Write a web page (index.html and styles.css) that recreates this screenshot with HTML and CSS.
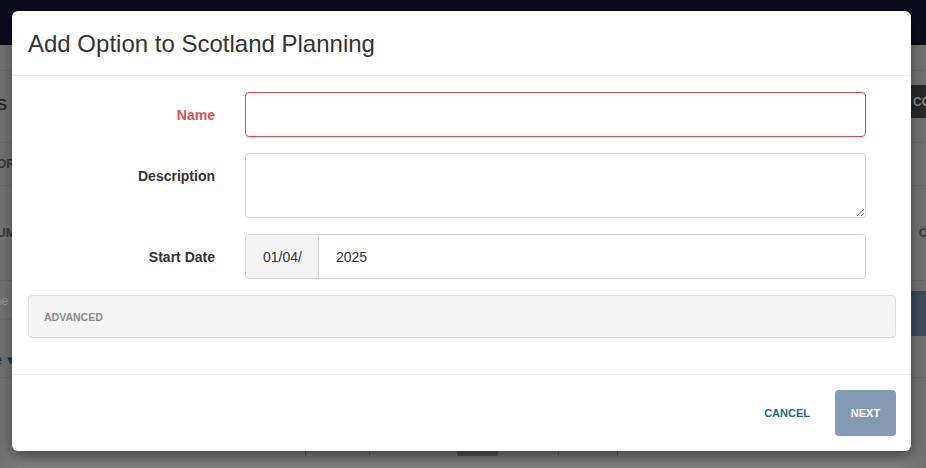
FILE: index.html
```html
<!DOCTYPE html>
<html>
<head>
<meta charset="utf-8">
<link rel="stylesheet" href="styles.css">
</head>
<body>
<div class="page">
  <div class="navbar"></div>
  <div class="bg-row r1"></div>
  <div class="bg-row r2"><span class="bg-h">s</span><span class="bg-dark-btn">CO</span></div>
  <div class="bg-row r3"><span class="bg-th">ORI</span></div>
  <div class="bg-row r4"><span class="bg-th">UM</span><span class="bg-th">OV</span></div>
  <div class="bg-row r5"><span class="bg-input">ne</span><span class="bg-navy-btn">–</span></div>
  <div class="bg-row r6"><span class="bg-link">e ▾</span></div>
  <div class="bg-row r7"></div>
  <div class="pager">
    <span class="pg w64">FIRST</span><span class="pg w88">PREVIOUS</span><span class="pg w40 cur">1</span><span class="pg w61">NEXT</span><span class="pg w60">LAST</span>
  </div>
</div>

<div class="modal">
  <div class="modal-header">
    <h4 class="modal-title">Add Option to Scotland Planning</h4>
  </div>
  <div class="modal-body">
    <div class="form-row">
      <label class="form-label error">Name</label>
      <input class="form-input error-input" type="text">
    </div>
    <div class="form-row">
      <label class="form-label">Description</label>
      <textarea class="form-input form-textarea"></textarea>
    </div>
    <div class="form-row">
      <label class="form-label">Start Date</label>
      <div class="input-group">
        <span class="addon">01/04/</span>
        <span class="group-value">2025</span>
      </div>
    </div>
    <div class="advanced">ADVANCED</div>
  </div>
  <div class="modal-footer">
    <button class="btn-cancel">CANCEL</button>
    <button class="btn-next">NEXT</button>
  </div>
</div>
</body>
</html>
```

FILE: styles.css
```css
* { box-sizing: border-box; }
html, body { margin: 0; padding: 0; }
body {
  width: 926px;
  height: 468px;
  overflow: hidden;
  font-family: "Liberation Sans", Arial, Helvetica, sans-serif;
  background: #7b7b7b;
  position: relative;
}

/* background page (already dimmed by backdrop) */
.page {
  height: 468px;
  display: flex;
  flex-direction: column;
  background: linear-gradient(90deg, #727272 0%, #7f7f7f 2%, #7f7f7f 97%, #707070 100%);
}
.navbar { height: 45px; background: #0b0c1a; flex: none; }
.bg-row {
  flex: none;
  display: flex;
  justify-content: space-between;
  align-items: center;
  border-bottom: 1px solid #6c6c6c;
  color: #333;
  font-size: 14px;
}
.r1 { height: 26px; }
.r2 { height: 72px; }
.r3 { height: 43px; }
.r4 { height: 95px; }
.r5 { height: 39px; border-bottom-color: #6f6f6f; }
.r6 { height: 58px; align-items: flex-end; padding-bottom: 8px; }
.r7 { height: 50px; border-bottom: none; }
.bg-h { font-size: 20px; color: #1f1f1f; margin-left: -3px; margin-top: -6px; }
.bg-dark-btn {
  background: #2a2a2a; color: #8a8a8a; font-weight: bold; font-size: 12px;
  height: 33px; width: 40px; padding: 10px 0 0 27px; margin-top: -10px;
}
.bg-th { font-size: 12px; font-weight: bold; color: #3c3c3c; margin: 0 -10px 0 -3px; }
.bg-input { color: #9a9a9a; font-size: 13px; margin-left: -6px; }
.bg-navy-btn {
  background: #3f4c5c; color: #8a93a0; height: 45px; width: 40px;
  align-self: flex-start; margin-top: 10px; padding: 14px 0 0 4px;
}
.bg-link { color: #0e3d4f; font-size: 15px; margin-left: -6px; }
.pager {
  flex: none;
  display: flex;
  margin-left: 305px;
  margin-top: -12px;
  height: 40px;
}
.pg {
  border-left: 1px solid #5f5f5f;
  background: #7a7a7a;
  color: #6a6a6a;
  font-size: 13px;
  text-align: center;
  padding-top: 2px;
}
.pg.cur { background: #565656; color: #222; }
.pg:last-child { border-right: 1px solid #5f5f5f; }
.w64 { width: 64px; } .w88 { width: 88px; } .w40 { width: 40px; } .w61 { width: 61px; } .w60 { width: 60px; }

/* modal */
.modal {
  position: absolute;
  left: 12px;
  top: 11px;
  width: 899px;
  background: #fff;
  border-radius: 6px;
  box-shadow: 0 5px 15px rgba(0,0,0,0.5);
}
.modal-header {
  height: 65px;
  padding: 0 16px;
  display: flex;
  align-items: center;
  border-bottom: 1px solid #eeeeee;
}
.modal-title {
  margin: 0;
  font-size: 24px;
  font-weight: normal;
  color: #333;
  padding-top: 1px;
}
.modal-body {
  padding: 16px 15px 36px 16px;
  display: flex;
  flex-direction: column;
  gap: 16px;
}
.form-row {
  display: grid;
  grid-template-columns: 187px 621px;
  column-gap: 30px;
  align-items: center;
}
.form-label {
  text-align: right;
  font-size: 14px;
  font-weight: bold;
  color: #333;
}
.form-label.error { color: #d9534f; }
.form-input {
  height: 45px;
  border: 1px solid #d4d4d4;
  border-radius: 4px;
  font-family: inherit;
  font-size: 14px;
  padding: 6px 16px;
  outline: none;
  margin: 0;
}
.error-input { border-color: #dd4a48; }
.form-textarea { height: 65px; resize: vertical; display: block; }
.form-row:nth-child(2) { align-items: start; }
.form-row:nth-child(2) .form-label { padding-top: 15px; }
.input-group {
  display: flex;
  height: 45px;
  border: 1px solid #d4d4d4;
  border-radius: 4px;
  overflow: hidden;
  font-size: 14px;
  color: #333;
}
.addon {
  width: 73px;
  background: #f3f3f3;
  border-right: 1px solid #d4d4d4;
  display: flex;
  align-items: center;
  justify-content: center;
  padding-left: 1px;
}
.group-value {
  display: flex;
  align-items: center;
  padding-left: 17px;
}
.advanced {
  height: 43px;
  background: #f4f4f4;
  border: 1px solid #dddddd;
  border-radius: 4px;
  padding-left: 15px;
  display: flex;
  align-items: center;
  font-size: 10.5px;
  font-weight: bold;
  color: #8c8c8c;
}
.modal-footer {
  border-top: 1px solid #eeeeee;
  padding: 15px 15px 15px 16px;
  display: flex;
  justify-content: flex-end;
  align-items: center;
  gap: 13px;
}
.btn-cancel {
  background: none;
  border: none;
  font-family: inherit;
  font-size: 11px;
  font-weight: bold;
  color: #1a6b84;
  padding: 0 12px;
  height: 46px;
}
.btn-next {
  width: 61px;
  height: 46px;
  background: #8499b2;
  border: none;
  border-radius: 4px;
  color: #fff;
  font-family: inherit;
  font-size: 11px;
  font-weight: bold;
  padding: 0;
}
```
